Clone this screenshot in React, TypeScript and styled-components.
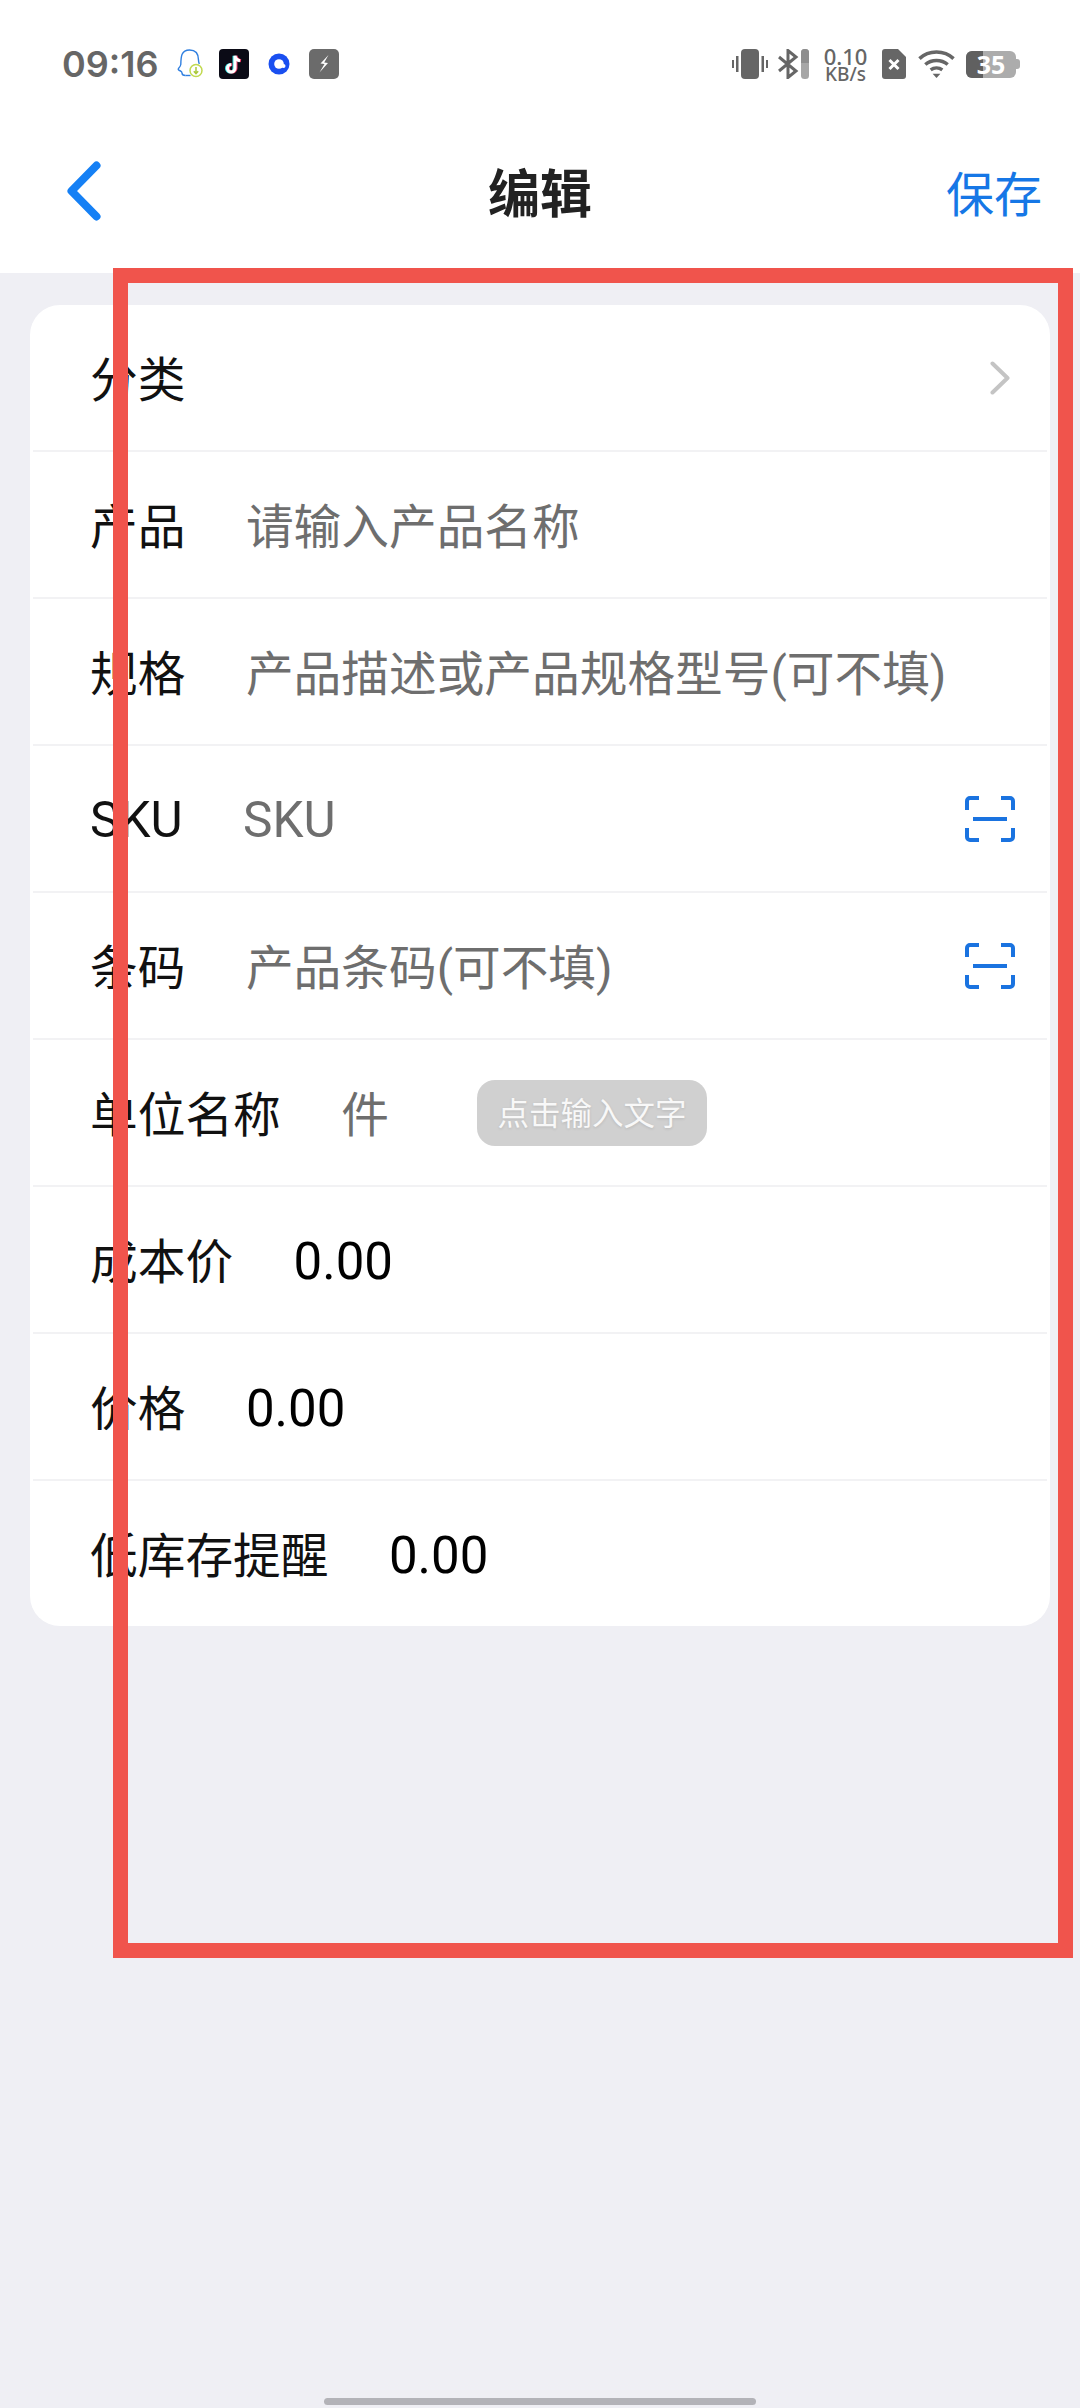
import React from "react";
import styled, { createGlobalStyle } from "styled-components";

const GlobalStyle = createGlobalStyle`
  html, body {
    margin: 0;
    padding: 0;
    background: #efeff4;
    font-family: "Roboto", "Noto Sans CJK SC", sans-serif;
  }
  * { box-sizing: border-box; }
`;

const Page = styled.div`
  position: relative;
  width: 1080px;
  height: 2408px;
  overflow: hidden;
  display: flex;
  flex-direction: column;
  background: #efeff4;
`;

const Top = styled.div`
  background: #fff;
`;

const StatusBar = styled.div`
  height: 128px;
  padding: 0 60px 0 62px;
  display: flex;
  align-items: center;
  justify-content: space-between;
`;

const StatusGroup = styled.div`
  display: flex;
  align-items: center;
`;

const Clock = styled.span`
  font-family: "Inter", sans-serif;
  font-size: 36px;
  font-weight: 600;
  color: #666;
  margin-right: 18px;
  width: 97px;
`;

const SpeedText = styled.div`
  display: flex;
  flex-direction: column;
  align-items: center;
  font-family: "Noto Sans", sans-serif;
  font-weight: 500;
  color: #666;
  width: 45px;
  margin: 0 14px;
`;

const SpeedValue = styled.span`
  font-size: 22px;
  line-height: 20px;
`;

const SpeedUnit = styled.span`
  font-size: 19px;
  line-height: 17px;
  white-space: nowrap;
`;

const BatteryBox = styled.div`
  position: relative;
  width: 50px;
  height: 27px;
  margin-left: 11px;
  border-radius: 6px;
  background: #acacac;
  color: #fff;
  font-family: "Noto Sans", sans-serif;
  font-size: 25px;
  font-weight: 700;
  line-height: 27px;
  text-align: center;
`;

const BatteryFill = styled.div`
  position: absolute;
  left: 0;
  top: 0;
  bottom: 0;
  width: 17px;
  border-radius: 6px 0 0 6px;
  background: #606060;
`;

const BatteryText = styled.span`
  position: relative;
`;

const BatteryTip = styled.div`
  width: 4px;
  height: 10px;
  border-radius: 0 3px 3px 0;
  background: #acacac;
`;

const NavBar = styled.div`
  height: 145px;
  padding: 7px 38px 16px;
  display: grid;
  grid-template-columns: 1fr auto 1fr;
  align-items: center;
`;

const BackSlot = styled.div`
  display: flex;
  padding-left: 29px;
  margin-bottom: 10px;
`;

const Title = styled.div`
  font-size: 52px;
  font-weight: 700;
  color: #222;
  line-height: 1;
`;

const SaveButton = styled.div`
  text-align: right;
  font-size: 48px;
  line-height: 1;
  color: #1677e6;
`;

const Card = styled.div`
  margin: 32px 30px 0;
  padding: 0 3px;
  background: #fff;
  border-radius: 30px;
`;

const Row = styled.div`
  height: 147px;
  padding: 0 32px 3px 57px;
  display: flex;
  align-items: center;
  gap: 60.5px;
  border-bottom: 2px solid #f2f2f4;
  font-size: 47.7px;

  &:last-child {
    height: 145px;
    border-bottom: 0;
  }
`;

const Label = styled.span<{ $latin?: boolean }>`
  color: #111;
  font-size: ${({ $latin }) => ($latin ? "49.5px" : "inherit")};
  margin-top: ${({ $latin }) => ($latin ? "5px" : "0")};
`;

const Value = styled.span<{ $muted?: boolean; $latin?: boolean; $numeric?: boolean }>`
  color: ${({ $muted }) => ($muted ? "#6e6e6e" : "#000")};
  font-size: ${({ $numeric, $latin }) => ($numeric ? "51px" : $latin ? "49.5px" : "inherit")};
  margin-top: ${({ $numeric, $latin }) => ($numeric ? "7px" : $latin ? "5px" : "0")};
`;

const RowEnd = styled.div`
  margin-left: auto;
  margin-top: 3px;
  display: flex;
  align-items: center;
`;

const Toast = styled.div`
  position: absolute;
  left: 477px;
  top: 1080px;
  width: 230px;
  height: 66px;
  padding-bottom: 4px;
  display: flex;
  align-items: center;
  justify-content: center;
  border-radius: 18px;
  background: #d0d0d0;
  color: #f8f8f8;
  font-size: 31.5px;
  text-shadow: 0 1px 3px rgba(0, 0, 0, 0.12);
`;

const Highlight = styled.div`
  position: absolute;
  left: 113px;
  top: 268px;
  width: 960px;
  height: 1690px;
  border: 15px solid #f0544c;
  pointer-events: none;
`;

const HomeBar = styled.div`
  width: 432px;
  height: 7px;
  margin: auto auto 3px;
  border-radius: 4px;
  background: #b3b3b8;
`;

function BackIcon() {
  return (
    <svg width="34" height="60" viewBox="0 0 34 60" fill="none" stroke="#1580f5" strokeWidth="8" strokeLinecap="round" strokeLinejoin="round">
      <path d="M29.500 4.500L4.500 30l25 25.500" />
    </svg>
  );
}

function ChevronIcon() {
  return (
    <svg width="20" height="34" viewBox="0 0 20 34" fill="none" stroke="#c4c4c4" strokeWidth="4" strokeLinecap="round" strokeLinejoin="round" style={{ marginRight: 5 }}>
      <path d="M2.500 2.500L17.500 17l-15 14.500" />
    </svg>
  );
}

function ScanIcon() {
  return (
    <svg width="50" height="46" viewBox="0 0 50 46" fill="none" stroke="#1a73e0" strokeWidth="4">
      <path d="M2 14V5a3 3 0 0 1 3-3h9" />
      <path d="M36 2h9a3 3 0 0 1 3 3v9" />
      <path d="M2 32v9a3 3 0 0 0 3 3h9" />
      <path d="M36 44h9a3 3 0 0 0 3-3v-9" />
      <path d="M8 23h34" />
    </svg>
  );
}

function QQIcon() {
  return (
    <svg width="26" height="30" viewBox="0 0 26 30" fill="none" style={{ marginRight: 16 }}>
      <path
        d="M8.500 26.500c-2.500 0-3.500-1-3.500-2.500 0-1-.500-1.500-1.500-2-2-.800-2.800-1.500-2-2.500 1-1.300 2-2.300 2.300-4C4 8 4 1 12.500 1 20 1 21.500 6 21.500 11c0 1.300.300 2.600.800 4"
        stroke="#2f7fe0"
        strokeWidth="1.400"
      />
      <path d="M8.500 26.500h5" stroke="#2f7fe0" strokeWidth="1.400" />
      <circle cx="19" cy="21.500" r="6" fill="#fff" stroke="#c1d94f" strokeWidth="1.500" />
      <path d="M19 18v6.500M16.800 22.200l2.200 2.400 2.200-2.400" stroke="#a9c93c" strokeWidth="1.500" />
    </svg>
  );
}

function TikTokIcon() {
  const note = "M16 6v12.500a3.800 3.800 0 1 1-3.800-3.800M16 6c.400 2.800 2.200 4.600 5 5";
  return (
    <svg width="30" height="30" viewBox="0 0 30 30" fill="none" strokeWidth="3" style={{ marginRight: 19 }}>
      <rect width="30" height="30" rx="4" fill="#0b0b16" />
      <path d={note} stroke="#35e0e0" transform="translate(-1 .8)" />
      <path d={note} stroke="#f0416a" transform="translate(1 .8)" />
      <path d={note} stroke="#fff" transform="translate(0 .8)" />
    </svg>
  );
}

function RingIcon() {
  return (
    <svg width="22" height="22" viewBox="0 0 22 22" style={{ marginRight: 19 }}>
      <circle cx="11" cy="11" r="10.500" fill="#1a4ff0" />
      <circle cx="11" cy="11" r="4.800" fill="#fff" />
      <circle cx="15.500" cy="13" r="2" fill="#fff" />
    </svg>
  );
}

function BoltIcon() {
  return (
    <svg width="30" height="30" viewBox="0 0 30 30">
      <rect width="30" height="30" rx="5" fill="#6b6b6b" />
      <path d="M19.500 6l-8 8.500 4 .5-5 8.500 8.500-9.500-3.800-.5z" fill="#fff" />
    </svg>
  );
}

function VibrateIcon() {
  return (
    <svg width="36" height="30" viewBox="0 0 36 30" fill="#666">
      <rect x="9" y="0" width="18" height="30" rx="4" />
      <rect x="0" y="11" width="2" height="8" />
      <rect x="4" y="7" width="2.500" height="16" />
      <rect x="29.500" y="7" width="2.500" height="16" />
      <rect x="34" y="11" width="2" height="8" />
    </svg>
  );
}

function BluetoothIcon() {
  return (
    <svg width="32" height="30" viewBox="0 0 32 30" fill="none" style={{ marginLeft: 9 }}>
      <path d="M2 8l17 14-8 6.500V1.500L19 8 2 22" stroke="#666" strokeWidth="3" />
      <rect x="24" y="0" width="8" height="30" rx="3.500" fill="#a6a6a6" />
      <path d="M24 3.500a3.500 3.500 0 0 1 3.500-3.500h1a3.500 3.500 0 0 1 3.500 3.500V14h-8z" fill="#8e8e8e" />
    </svg>
  );
}

function SimIcon() {
  return (
    <svg width="24" height="30" viewBox="0 0 24 30">
      <path d="M3 0h13l8 8v19a3 3 0 0 1-3 3H3a3 3 0 0 1-3-3V3a3 3 0 0 1 3-3z" fill="#666" />
      <path d="M7.500 11l9 9M16.500 11l-9 9" stroke="#fff" strokeWidth="3" />
    </svg>
  );
}

function WifiIcon() {
  return (
    <svg width="37" height="30" viewBox="0 0 38 30" fill="none" stroke="#666" strokeWidth="3.600" style={{ marginLeft: 12 }}>
      <path d="M1.500 9.500C11 .500 27 .500 36.500 9.500" />
      <path d="M7.500 15.500c6.500-5.500 16.500-5.500 23 0" />
      <path d="M13 21c3.500-2.500 8.500-2.500 12 0" />
      <path d="M15 25h8l-4 4.500z" fill="#666" stroke="none" />
    </svg>
  );
}

const ROWS: {
  label: string;
  value?: string;
  muted?: boolean;
  latin?: boolean;
  numeric?: boolean;
  end?: "chevron" | "scan";
}[] = [
  { label: "分类", end: "chevron" },
  { label: "产品", value: "请输入产品名称", muted: true },
  { label: "规格", value: "产品描述或产品规格型号(可不填)", muted: true },
  { label: "SKU", value: "SKU", muted: true, latin: true, end: "scan" },
  { label: "条码", value: "产品条码(可不填)", muted: true, end: "scan" },
  { label: "单位名称", value: "件", muted: true },
  { label: "成本价", value: "0.00", numeric: true },
  { label: "价格", value: "0.00", numeric: true },
  { label: "低库存提醒", value: "0.00", numeric: true },
];

export default function App() {
  return (
    <Page>
      <GlobalStyle />
      <Top>
        <StatusBar>
          <StatusGroup>
            <Clock>09:16</Clock>
            <QQIcon />
            <TikTokIcon />
            <RingIcon />
            <BoltIcon />
          </StatusGroup>
          <StatusGroup>
            <VibrateIcon />
            <BluetoothIcon />
            <SpeedText>
              <SpeedValue>0.10</SpeedValue>
              <SpeedUnit>KB/s</SpeedUnit>
            </SpeedText>
            <SimIcon />
            <WifiIcon />
            <BatteryBox>
              <BatteryFill />
              <BatteryText>35</BatteryText>
            </BatteryBox>
            <BatteryTip />
          </StatusGroup>
        </StatusBar>
        <NavBar>
          <BackSlot>
            <BackIcon />
          </BackSlot>
          <Title>编辑</Title>
          <SaveButton>保存</SaveButton>
        </NavBar>
      </Top>
      <Card>
        {ROWS.map((row) => (
          <Row key={row.label}>
            <Label $latin={row.latin}>{row.label}</Label>
            {row.value && (
              <Value $muted={row.muted} $latin={row.latin} $numeric={row.numeric}>
                {row.value}
              </Value>
            )}
            {row.end && <RowEnd>{row.end === "chevron" ? <ChevronIcon /> : <ScanIcon />}</RowEnd>}
          </Row>
        ))}
      </Card>
      <Toast>点击输入文字</Toast>
      <Highlight />
      <HomeBar />
    </Page>
  );
}
